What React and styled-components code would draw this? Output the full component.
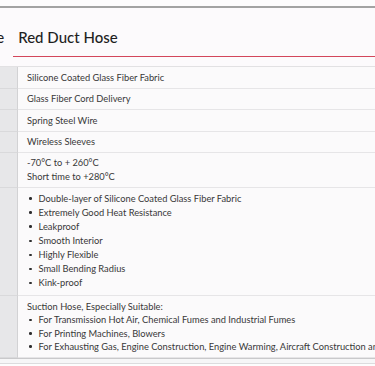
import React from "react";
import styled, { createGlobalStyle } from "styled-components";

const GlobalStyle = createGlobalStyle`
  html, body {
    margin: 0;
    padding: 0;
    background: #fdfcfd;
    overflow: hidden;
  }
  body {
    font-family: Lato, "Noto Sans", "Liberation Sans", sans-serif;
    color: #333;
  }
`;

const Page = styled.div`
  width: 375px;
  height: 366px;
  overflow: hidden;
  padding-top: 6px;
  box-sizing: border-box;
`;

const TopRule = styled.div`
  height: 2px;
  background: #a3a3a3;
`;

const Panel = styled.section`
  background: #fcfafc;
`;

const TabBar = styled.nav`
  display: flex;
  align-items: flex-end;
  margin-left: -70px;
  padding-top: 19px;
  white-space: nowrap;
`;

const Tab = styled.div`
  flex: ${(p) => (p.$active ? "1 1 auto" : "0 0 auto")};
  font-size: 15px;
  line-height: 20px;
  font-weight: 500;
  color: #1f1f1f;
  padding: 0 5px 9px;
  margin-left: ${(p) => (p.$active ? "4px" : "0")};
  border-bottom: 1px solid ${(p) => (p.$active ? "#d3465b" : "transparent")};
`;

const Gap = styled.div`
  height: 9px;
  border-bottom: 1px solid #e2e1e3;
`;

const Table = styled.div`
  display: grid;
  grid-template-columns: 18px 1fr;
  border-bottom: 1px solid #c9c9cb;
`;

const Label = styled.div`
  background: #e7e7e9;
  border-right: 1px solid #d2d2d4;
  border-bottom: 1px solid #d9d9db;
`;

const Value = styled.div`
  background: #fbfafb;
  border-bottom: 1px solid #e6e5e7;
  padding: ${(p) => p.$pad || "3.5px 0 3.5px 9px"};
  font-size: 9.3px;
  line-height: ${(p) => p.$lh || "13.5px"};
  color: #383838;
  white-space: nowrap;
  overflow: hidden;
`;

const Line = styled.div``;

const List = styled.ul`
  list-style: none;
  margin: 0;
  padding: 0;
`;

const Item = styled.li`
  display: flex;
  align-items: center;
  &::before {
    content: "";
    flex: 0 0 auto;
    width: 2.5px;
    height: 2.5px;
    border-radius: 50%;
    background: #2e2e2e;
    margin: 0 7px 0 2px;
  }
`;

const Footer = styled.div`
  height: 4px;
  background: #f6f6f7;
  border-bottom: 1px solid #dcdcde;
`;

const Below = styled.div`
  height: 20px;
  background: #fdfdfd;
`;

const features = [
  "Double-layer of Silicone Coated Glass Fiber Fabric",
  "Extremely Good Heat Resistance",
  "Leakproof",
  "Smooth Interior",
  "Highly Flexible",
  "Small Bending Radius",
  "Kink-proof",
];

const uses = [
  "For Transmission Hot Air, Chemical Fumes and Industrial Fumes",
  "For Printing Machines, Blowers",
  "For Exhausting Gas, Engine Construction, Engine Warming, Aircraft Construction and Military Vehicles",
];

export default function App() {
  return (
    <Page>
      <GlobalStyle />
      <TopRule />
      <Panel>
        <TabBar>
          <Tab>Grey Hose</Tab>
          <Tab $active>Red Duct Hose</Tab>
        </TabBar>
        <Gap />
      </Panel>
      <Table>
        <Label />
        <Value>Silicone Coated Glass Fiber Fabric</Value>
        <Label />
        <Value>Glass Fiber Cord Delivery</Value>
        <Label />
        <Value>Spring Steel Wire</Value>
        <Label />
        <Value>Wireless Sleeves</Value>
        <Label />
        <Value $lh="14px" $pad="3px 0 3px 9px">
          <Line>-70°C to + 260°C</Line>
          <Line>Short time to +280°C</Line>
        </Value>
        <Label />
        <Value $lh="14.1px" $pad="3.5px 0 5px 9px">
          <List>
            {features.map((f) => (
              <Item key={f}>{f}</Item>
            ))}
          </List>
        </Value>
        <Label />
        <Value $lh="13.3px" $pad="4px 0 4px 9px">
          <Line>Suction Hose, Especially Suitable:</Line>
          <List>
            {uses.map((u) => (
              <Item key={u}>{u}</Item>
            ))}
          </List>
        </Value>
      </Table>
      <Footer />
      <Below />
    </Page>
  );
}
